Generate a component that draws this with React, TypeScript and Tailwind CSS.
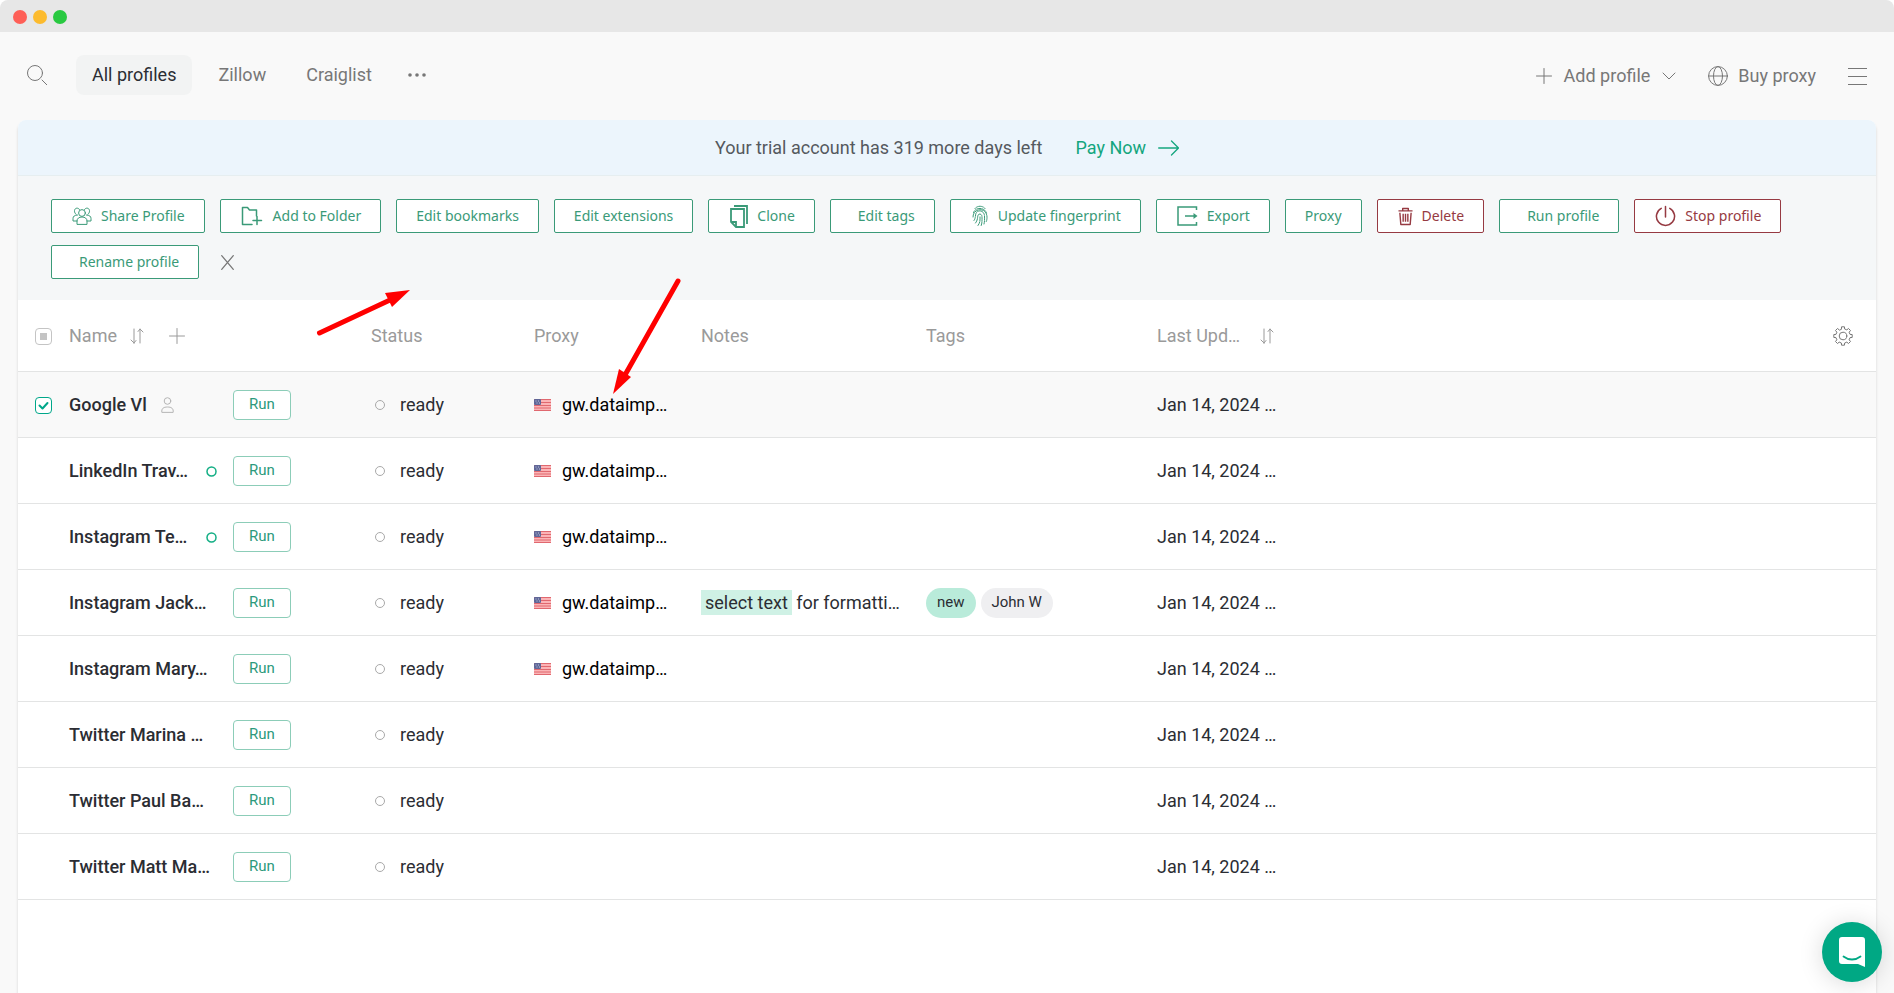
import type { ReactNode } from "react"

const stroke = { fill: "none", stroke: "currentColor", strokeLinecap: "round", strokeLinejoin: "round" } as const

const PlusIcon = () => (
  <svg width="16" height="16" viewBox="0 0 16 16" {...stroke}>
    <path d="M8 0.5v15M0.5 8h15" />
  </svg>
)

const SortIcon = () => (
  <svg width="14" height="16" viewBox="0 0 14 16" {...stroke}>
    <path d="M4 1v14M1 12l3 3M6 12.5L4 15M10 15V1M8 3.5L10 1l3 3" />
  </svg>
)

const PeopleIcon = () => (
  <svg width="20" height="18" viewBox="0 0 20 18" {...stroke}>
    <circle cx="10" cy="6" r="3.4" />
    <path d="M5 17v-3c0-2.500 2-4 5-4s5 1.500 5 4v3z" />
    <path d="M7.500 2.500C6.500 0.500 3 0.500 2.500 3.500c-.2 2 .8 3 1.500 3.700M12.500 2.500c1-2 4.500-2 5 1 .2 2-.8 3-1.500 3.700M5 14H1v-2.500c0-2 1.500-3.500 4.500-3.500M15 14h4v-2.500c0-2-1.500-3.500-4.500-3.500" />
  </svg>
)

const FolderIcon = () => (
  <svg width="23" height="20" viewBox="0 0 23 20" {...stroke} strokeWidth="1.500">
    <path d="M11 18.500H1.500V1.500h5l2 2.500h7v6M16 10.500v8M12 14.500h8.500" />
  </svg>
)

const CloneIcon = () => (
  <svg width="19" height="23" viewBox="-1 0 19 23" {...stroke} strokeLinecap="butt" strokeLinejoin="miter" strokeWidth="1.800">
    <path d="M4 1h13V19" />
    <path d="M1 4h13v18H6L1 17z" />
    <path d="M1.500 17H6v4.500" />
  </svg>
)

const FingerprintIcon = () => (
  <svg width="18" height="22" viewBox="-1 0 18 22" {...stroke} strokeWidth="1">
    <path
      d="M3 3.500C5.500 0.500 10.500 0.500 13 3.500M1.500 7.500C3.500 2 12.500 2 14.500 8M1 12c0-9 13.500-10.500 14 0 0 1.500 0 3-.7 4.500M2 15.500C4 13 3 9 4.500 7.500c3-3.500 8-1 8 3.500 0 2.500.3 5-.5 8M3.500 18c3-4 1.500-7 3-8.500 1.500-1.300 3.500 0 3.500 2 0 3 .3 6-.8 9M6 20.500c2.500-3.500 2-6 2-9"
      strokeDasharray="4 1"
    />
  </svg>
)

const ExportIcon = () => (
  <svg width="21" height="20" viewBox="0 0 21 20" {...stroke} strokeLinecap="butt" strokeLinejoin="miter" strokeWidth="1.500">
    <path d="M19.500 4V1H1v18h18.500v-3M8 10h9" />
    <path d="M16.500 7l4 3-4 3z" fill="currentColor" stroke="none" />
  </svg>
)

const TrashIcon = () => (
  <svg width="15" height="19" viewBox="0 0 16 19" {...stroke} strokeLinecap="butt" strokeWidth="1.500">
    <path d="M0.500 3.500h15M5 3.500V1h6v2.500M2 5.500l1 12.500h10l1-12.500M5.500 6.500V15M8 6.500V15M10.500 6.500V15" />
  </svg>
)

const PowerIcon = () => (
  <svg width="21" height="22" viewBox="0 0 22 22" {...stroke} strokeWidth="1.600">
    <path d="M11 1v11M6.500 3a9.500 9.500 0 1 0 9 0" />
  </svg>
)

// eight teeth, four points each: up, across the tip, down, along the root
const gearPoints = Array.from({ length: 8 }, (_, tooth) =>
  [
    [-13, 7.2],
    [-9, 9.3],
    [9, 9.3],
    [13, 7.2],
  ]
    .map(([offset, radius]) => {
      const angle = ((tooth * 45 + offset) * Math.PI) / 180
      return `${(10 + radius * Math.sin(angle)).toFixed(2)},${(10 - radius * Math.cos(angle)).toFixed(2)}`
    })
    .join(" ")
).join(" ")

const GearIcon = () => (
  <svg width="20" height="20" viewBox="0 0 20 20" {...stroke}>
    <circle cx="10" cy="10" r="3.800" />
    <polygon points={gearPoints} />
  </svg>
)

const FlagIcon = () => (
  <svg width="17" height="12" viewBox="0 0 17 12" className="shrink-0">
    <rect width="17" height="12" rx="1" fill="#fbb4b6" />
    <path d="M0 .5h17M0 3.500h17M0 6.500h17M0 9h17M0 11.500h17" stroke="#e0686f" />
    <rect width="7" height="6" rx="1" fill="#5f6798" />
    <path d="M1.500 2h1M4 2h1M2.500 4h1M5 4h1" stroke="#c3c7dd" />
  </svg>
)

const PersonIcon = () => (
  <svg width="13" height="16" viewBox="0 0 13 16" className="shrink-0 text-[#b5b5b5]" {...stroke}>
    <circle cx="6.500" cy="4" r="3.300" />
    <path d="M.8 15c-.5-3.500 1.700-5 5.700-5s6.200 1.500 5.700 5z" />
  </svg>
)

interface Action {
  label: string
  icon?: ReactNode
  spaced?: boolean
  danger?: boolean
}

const actions: Action[] = [
  { label: "Share Profile", icon: <PeopleIcon /> },
  { label: "Add to Folder", icon: <FolderIcon /> },
  { label: "Edit bookmarks" },
  { label: "Edit extensions" },
  { label: "Clone", icon: <CloneIcon /> },
  { label: "Edit tags", spaced: true },
  { label: "Update fingerprint", icon: <FingerprintIcon /> },
  { label: "Export", icon: <ExportIcon /> },
  { label: "Proxy" },
  { label: "Delete", icon: <TrashIcon />, danger: true },
  { label: "Run profile", spaced: true },
  { label: "Stop profile", icon: <PowerIcon />, danger: true },
  { label: "Rename profile", spaced: true },
]

interface Profile {
  name: string
  proxy?: string
  note?: boolean
  tags?: boolean
  shared?: boolean
  online?: boolean
  checked?: boolean
}

const profiles: Profile[] = [
  { name: "Google Vl", proxy: "gw.dataimp…", shared: true, checked: true },
  { name: "LinkedIn Trav…", proxy: "gw.dataimp…", online: true },
  { name: "Instagram Te…", proxy: "gw.dataimp…", online: true },
  { name: "Instagram Jack…", proxy: "gw.dataimp…", note: true, tags: true },
  { name: "Instagram Mary…", proxy: "gw.dataimp…" },
  { name: "Twitter Marina …" },
  { name: "Twitter Paul Ba…" },
  { name: "Twitter Matt Ma…" },
]

const ActionButton = ({ label, icon, spaced, danger }: Action) => (
  <button
    type="button"
    className={`flex h-[34px] items-center gap-[9px] rounded-xs border bg-white pr-[19px] ${
      spaced ? "pl-[27px]" : icon ? "pl-5" : "pl-[19px]"
    } ${danger ? "border-[#963a42] text-[#963a42]" : "border-[#3a9a78] text-[#3a9a78]"}`}
  >
    {icon}
    <span>{label}</span>
  </button>
)

const TopBar = () => (
  <header className="flex h-[88px] items-center justify-between px-[27px] text-lg text-[#777]">
    <div className="flex items-center pb-0.5">
      <button type="button" aria-label="Search">
        <svg width="20" height="20" viewBox="0 0 20 20" {...stroke}>
          <circle cx="8" cy="8" r="7.500" />
          <path d="M15 15l5 5" />
        </svg>
      </button>
      <nav className="ml-[29px] flex items-center gap-2">
        <a href="#all" className="mr-0.5 rounded-lg bg-[#f2f3f3] px-4 py-1.5 text-[#2b2d33]">All profiles</a>
        <a href="#zillow" className="px-4 py-1.5">Zillow</a>
        <a href="#craiglist" className="px-4 py-1.5">Craiglist</a>
      </nav>
      <button type="button" aria-label="More folders" className="ml-5">
        <svg width="18" height="4" viewBox="0 0 18 4" fill="currentColor">
          <circle cx="2" cy="2" r="1.800" />
          <circle cx="9" cy="2" r="1.800" />
          <circle cx="16" cy="2" r="1.800" />
        </svg>
      </button>
    </div>
    <div className="flex items-center">
      <button type="button" className="flex items-center gap-3">
        <PlusIcon />
        <span>Add profile</span>
        <svg width="14" height="8" viewBox="0 0 14 8" {...stroke}>
          <path d="M1 1l6 6 6-6" />
        </svg>
      </button>
      <a href="#proxy" className="ml-8 flex items-center gap-2.5">
        <svg width="20" height="20" viewBox="0 0 20 20" {...stroke}>
          <circle cx="10" cy="10" r="9.400" />
          <ellipse cx="10" cy="10" rx="4.500" ry="9.400" />
          <path d="M.6 10h18.800" />
        </svg>
        <span>Buy proxy</span>
      </a>
      <button type="button" aria-label="Menu" className="ml-8">
        <svg width="19" height="17" viewBox="0 0 19 17" stroke="currentColor">
          <path d="M0 .5h19M0 8.500h19M0 16.500h19" />
        </svg>
      </button>
    </div>
  </header>
)

const ProfileRow = ({ profile }: { profile: Profile }) => (
  <tr className={`h-[66px] border-b border-[#e3e4e4] *:pt-0.5 ${profile.checked ? "bg-[#f9f9f9]" : ""}`}>
    <td className="pl-[17px]">
      {profile.checked && (
        <div className="relative size-[17px]">
          <input
            type="checkbox"
            defaultChecked
            aria-label={`Select ${profile.name}`}
            className="block size-[17px] appearance-none rounded-sm border border-[#00a78a] bg-white"
          />
          <svg width="17" height="17" viewBox="0 0 17 17" className="pointer-events-none absolute top-0 left-0 text-[#00a78a]" {...stroke} strokeWidth="2">
            <path d="M4.500 8.500l3 3 5-5.500" />
          </svg>
        </div>
      )}
    </td>
    <td className="pr-4">
      <div className="flex items-center gap-3.5">
        <span className="font-medium whitespace-nowrap">{profile.name}</span>
        {profile.shared && <PersonIcon />}
        {profile.online && (
          <svg width="11" height="11" viewBox="0 0 11 11" className="ml-auto shrink-0">
            <circle cx="5.500" cy="5.500" r="4.500" fill="none" stroke="#12ae84" strokeWidth="1.500" />
          </svg>
        )}
      </div>
    </td>
    <td>
      <button type="button" className="block h-[30px] w-[58px] rounded-sm border border-[#8ccdb8] bg-white text-[15px] text-[#2c9a7c]">
        Run
      </button>
    </td>
    <td>
      <div className="flex items-center gap-[15px] pl-1">
        <span className="size-2.5 rounded-full border border-[#a9a9a9]" />
        ready
      </div>
    </td>
    <td>
      {profile.proxy && (
        <div className="flex items-center gap-[11px] text-black">
          <FlagIcon />
          {profile.proxy}
        </div>
      )}
    </td>
    <td className="whitespace-nowrap">
      {profile.note && (
        <>
          <mark className="bg-[#cff1e5] px-1 py-0.5 text-[#2b2d33]">select text</mark> for formatti…
        </>
      )}
    </td>
    <td>
      {profile.tags && (
        <div className="flex items-center gap-[5px] text-[15px]">
          <span className="rounded-full bg-[#b9ebda] px-[11px] py-[3px]">new</span>
          <span className="rounded-full bg-[#efeff1] px-[11px] py-[3px]">John W</span>
        </div>
      )}
    </td>
    <td colSpan={2}>Jan 14, 2024 …</td>
  </tr>
)

const ProfileTable = () => (
  <table className="w-full table-fixed border-collapse text-lg text-[#2b2d33]">
    <colgroup>
      <col className="w-[51px]" />
      <col className="w-[164px]" />
      <col className="w-[138px]" />
      <col className="w-[163px]" />
      <col className="w-[167px]" />
      <col className="w-[225px]" />
      <col className="w-[231px]" />
      <col />
      <col className="w-[43px]" />
    </colgroup>
    <thead>
      <tr className="h-[71px] border-b border-[#e3e4e4] text-left text-[#9a9a9a] *:pt-0.5 *:font-normal">
        <th className="pl-[17px]">
          <div className="relative size-[17px]">
            <input
              type="checkbox"
              aria-label="Select all profiles"
              className="block size-[17px] appearance-none rounded-sm border border-[#c4c4c4] bg-white"
            />
            <span className="pointer-events-none absolute top-[5px] left-[5px] size-[7px] bg-[#c4c4c4]" />
          </div>
        </th>
        <th colSpan={2}>
          <div className="flex items-center">
            Name
            <button type="button" aria-label="Sort by name" className="ml-[13px]"><SortIcon /></button>
            <button type="button" aria-label="Add column" className="ml-[25px]"><PlusIcon /></button>
          </div>
        </th>
        <th>Status</th>
        <th>Proxy</th>
        <th>Notes</th>
        <th>Tags</th>
        <th>
          <div className="flex items-center">
            Last Upd…
            <button type="button" aria-label="Sort by last update" className="ml-5"><SortIcon /></button>
          </div>
        </th>
        <th>
          <button type="button" aria-label="Table settings" className="block text-[#777]"><GearIcon /></button>
        </th>
      </tr>
    </thead>
    <tbody>
      {profiles.map((profile) => (
        <ProfileRow key={profile.name} profile={profile} />
      ))}
    </tbody>
  </table>
)

const App = () => {
  return (
    <div className="relative flex min-h-screen flex-col bg-[#f9f9f9] font-['Roboto',sans-serif]">
      <div className="bg-white">
        <div className="flex h-8 items-center gap-1.5 rounded-t-lg bg-[#e7e7e7] px-[13px] pt-0.5">
          <span className="size-3.5 rounded-full bg-[#fe5f57]" />
          <span className="size-3.5 rounded-full bg-[#fcbb2e]" />
          <span className="size-3.5 rounded-full bg-[#29c941]" />
        </div>
      </div>

      <TopBar />

      <main className="mx-[18px] flex grow flex-col rounded-t-lg bg-white shadow-[0_3px_3px_rgba(0,0,0,0.15)]">
        <div className="flex h-[55px] items-center justify-center gap-[33px] rounded-t-lg bg-[#ecf5fc] text-lg text-[#55595e]">
          <p>Your trial account has 319 more days left</p>
          <a href="#pay" className="flex items-center gap-3 text-[#14a67e]">
            Pay Now
            <svg width="21" height="16" viewBox="0 0 21 16" {...stroke} strokeWidth="1.300">
              <path d="M.7 8h19.500M13.500 1l7 7-7 7" />
            </svg>
          </a>
        </div>

        <div className="flex flex-wrap gap-x-[15px] gap-y-3 border-t border-[#e6eef0] bg-[#f5f7f8] px-[33px] pt-[23px] pb-[21px] font-['Noto_Sans',sans-serif] text-sm">
          {actions.map((action) => (
            <ActionButton key={action.label} {...action} />
          ))}
          <button type="button" aria-label="Close" className="ml-[7px] text-[#777]">
            <svg width="13" height="15" viewBox="0 0 13 15" {...stroke} strokeWidth="1.300">
              <path d="M.7 .7l11.600 13.600M12.300 .7L.7 14.300" />
            </svg>
          </button>
        </div>

        <ProfileTable />
      </main>

      {/* pointers to the toolbar and to the proxy column */}
      <svg width="94" height="50" viewBox="0 0 94 50" className="pointer-events-none absolute top-[288px] left-[316px]">
        <path d="M3.500 45L74 12" stroke="#ff0000" strokeWidth="5" strokeLinecap="round" />
        <path d="M94 2L69 5l7 14z" fill="#ff0000" />
      </svg>
      <svg width="70" height="118" viewBox="0 0 70 118" className="pointer-events-none absolute top-[277px] left-[612px]">
        <path d="M66 4L13 98" stroke="#ff0000" strokeWidth="5" strokeLinecap="round" />
        <path d="M1 117L7 92l12 8z" fill="#ff0000" />
      </svg>

      <button
        type="button"
        aria-label="Open chat"
        className="fixed right-3 bottom-[11px] flex size-[60px] items-center justify-center rounded-full bg-[#00a884] shadow-[0_2px_24px_rgba(0,0,0,0.15)]"
      >
        <svg width="26" height="30" viewBox="0 0 26 30">
          <path d="M3 0h20a3 3 0 0 1 3 3v27l-7-3H3a3 3 0 0 1-3-3V3a3 3 0 0 1 3-3z" fill="#fff" />
          <path d="M4.500 19.500c5 4 12 4 17 0" fill="none" stroke="#00a884" strokeWidth="1.800" strokeLinecap="round" />
        </svg>
      </button>
    </div>
  )
}

export default App
